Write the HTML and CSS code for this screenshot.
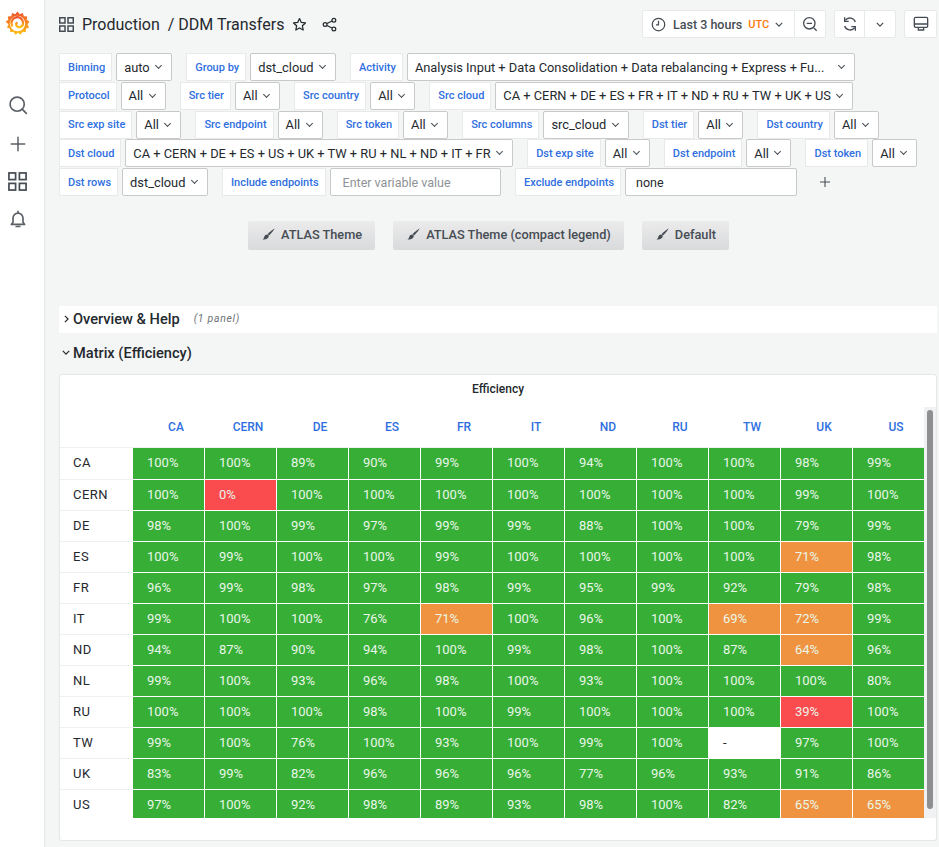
FILE: index.html
```html
<!DOCTYPE html>
<html lang="en">
<head>
    <meta charset="UTF-8">
    <meta name="viewport" content="width=device-width, initial-scale=1.0">
    <title>DDM Transfers</title>
    <link rel="stylesheet" href="styles.css">
</head>
<body>
    <nav class="sidebar">
        <svg class="logo" viewBox="0 0 24 24" width="25" height="26">
            <defs>
                <linearGradient id="logoGrad" x1="0" y1="1" x2="0" y2="0">
                    <stop offset="0" stop-color="#fcc214"/>
                    <stop offset="1" stop-color="#f0502a"/>
                </linearGradient>
            </defs>
            <path fill="url(#logoGrad)" d="M12 1l2.2 2.6 3-1.3.8 3.1 3.3.3-.5 3.2 2.7 1.8-1.9 2.6 1.5 3-3 1.2-.1 3.3-3.2-.4-1.6 2.8-2.7-1.8-2.7 1.8-1.6-2.8-3.2.4-.1-3.3-3-1.2 1.5-3L.5 10.7l2.7-1.8-.5-3.2 3.3-.3.8-3.1 3 1.3z"/>
            <circle cx="12" cy="12.500" r="7.400" fill="#fff"/>
            <path fill="none" stroke="url(#logoGrad)" stroke-width="2.200" stroke-linecap="round" d="M6.800 14.500a5.600 5.600 0 1 1 10.600-2.200 3.700 3.700 0 0 1-5 3.400 2.400 2.400 0 0 1-1.200-3.700"/>
        </svg>
        <svg class="nav-icon nav-search" viewBox="0 0 24 24" width="20" height="20"><circle cx="11" cy="11" r="8.500" fill="none" stroke="#5b6067" stroke-width="2"/><path d="M17 17l5 5" stroke="#5b6067" stroke-width="2" stroke-linecap="round"/></svg>
        <svg class="nav-icon nav-plus" viewBox="0 0 24 24" width="18" height="18"><path d="M12 3v18M3 12h18" stroke="#5b6067" stroke-width="2" stroke-linecap="round"/></svg>
        <svg class="nav-icon nav-apps" viewBox="0 0 20 20" width="19" height="19"><g fill="none" stroke="#464c54" stroke-width="1.8"><rect x="1" y="1" width="7" height="7"/><rect x="12" y="1" width="7" height="7"/><rect x="1" y="12" width="7" height="7"/><rect x="12" y="12" width="7" height="7"/></g></svg>
        <svg class="nav-icon nav-bell" viewBox="0 0 24 24" width="20" height="20"><path fill="none" stroke="#5b6067" stroke-width="2" stroke-linejoin="round" d="M6 11a6 6 0 0 1 12 0v5l2 2.500H4l2-2.500zM12 2v3M9 21h6"/></svg>
    </nav>

    <main class="main">
        <header class="topbar">
            <svg class="crumb-icon" viewBox="0 0 20 20" width="15" height="15"><g fill="none" stroke="#464c54" stroke-width="2"><rect x="1" y="1" width="7" height="7"/><rect x="12" y="1" width="7" height="7"/><rect x="1" y="12" width="7" height="7"/><rect x="12" y="12" width="7" height="7"/></g></svg>
            <span class="crumb">Production</span>
            <span class="crumb crumb-sep">/ DDM Transfers</span>
            <svg class="star" viewBox="0 0 24 24" width="15" height="15"><path fill="none" stroke="#24292e" stroke-width="2" stroke-linejoin="round" d="M12 2.500l2.900 6.200 6.600.8-4.900 4.600 1.300 6.700L12 17.500l-5.900 3.300 1.300-6.700-4.900-4.600 6.600-.8z"/></svg>
            <svg class="share" viewBox="0 0 24 24" width="15" height="15"><g fill="none" stroke="#24292e" stroke-width="2"><circle cx="5" cy="12" r="3"/><circle cx="19" cy="5" r="3"/><circle cx="19" cy="19" r="3"/><path d="M8 10.500l8-4M8 13.500l8 4"/></g></svg>

            <div class="tools">
                <div class="tool-group">
                    <div class="tool tool-time">
                        <svg viewBox="0 0 24 24" width="15" height="15"><circle cx="12" cy="12" r="10" fill="none" stroke="#464c54" stroke-width="2"/><path d="M12 6v6.500H8" fill="none" stroke="#464c54" stroke-width="2"/></svg>
                        <span class="time-text">Last 3 hours</span>
                        <span class="utc">UTC</span>
                        <svg class="chev" viewBox="0 0 10 6" width="8" height="5"><path d="M1 1l4 4 4-4" fill="none" stroke="#464c54" stroke-width="1.500"/></svg>
                    </div>
                    <div class="tool tool-zoom">
                        <svg viewBox="0 0 24 24" width="16" height="16"><circle cx="11" cy="11" r="8.500" fill="none" stroke="#464c54" stroke-width="2"/><path d="M17.500 17.500l4.500 4.500M7 11h8" stroke="#464c54" stroke-width="2"/></svg>
                    </div>
                </div>
                <div class="tool-group">
                    <div class="tool tool-refresh">
                        <svg viewBox="0 0 24 24" width="16" height="16"><path d="M20 9a8.500 8.500 0 0 0-15-2.500M4 15a8.500 8.500 0 0 0 15 2.500" fill="none" stroke="#464c54" stroke-width="2"/><path d="M4 2v6h6M20 22v-6h-6" fill="none" stroke="#464c54" stroke-width="2"/></svg>
                    </div>
                    <div class="tool tool-more">
                        <svg class="chev" viewBox="0 0 10 6" width="8" height="5"><path d="M1 1l4 4 4-4" fill="none" stroke="#464c54" stroke-width="1.500"/></svg>
                    </div>
                </div>
                <div class="tool-group">
                    <div class="tool tool-tv">
                        <svg viewBox="0 0 24 24" width="16" height="16"><path d="M4 2h16a2 2 0 0 1 2 2v11a2 2 0 0 1-2 2H4a2 2 0 0 1-2-2V4a2 2 0 0 1 2-2zM2 12h20M7 21h10M8 17v4M16 17v4" fill="none" stroke="#464c54" stroke-width="2"/></svg>
                    </div>
                </div>
            </div>
        </header>

        <section class="vars">
            <div class="var"><span class="var-label">Binning</span><span class="var-select">auto<i class="caret"></i></span></div>
            <div class="var"><span class="var-label">Group by</span><span class="var-select">dst_cloud<i class="caret"></i></span></div>
            <div class="var"><span class="var-label">Activity</span><span class="var-select var-activity">Analysis Input + Data Consolidation + Data rebalancing + Express + Fu...<i class="caret"></i></span></div>
            <div class="var"><span class="var-label">Protocol</span><span class="var-select">All<i class="caret"></i></span></div>
            <div class="var"><span class="var-label">Src tier</span><span class="var-select">All<i class="caret"></i></span></div>
            <div class="var"><span class="var-label">Src country</span><span class="var-select">All<i class="caret"></i></span></div>
            <div class="var"><span class="var-label">Src cloud</span><span class="var-select">CA + CERN + DE + ES + FR + IT + ND + RU + TW + UK + US<i class="caret"></i></span></div>
            <div class="var"><span class="var-label">Src exp site</span><span class="var-select">All<i class="caret"></i></span></div>
            <div class="var"><span class="var-label">Src endpoint</span><span class="var-select">All<i class="caret"></i></span></div>
            <div class="var"><span class="var-label">Src token</span><span class="var-select">All<i class="caret"></i></span></div>
            <div class="var"><span class="var-label">Src columns</span><span class="var-select">src_cloud<i class="caret"></i></span></div>
            <div class="var"><span class="var-label">Dst tier</span><span class="var-select">All<i class="caret"></i></span></div>
            <div class="var"><span class="var-label">Dst country</span><span class="var-select">All<i class="caret"></i></span></div>
            <div class="var"><span class="var-label">Dst cloud</span><span class="var-select">CA + CERN + DE + ES + US + UK + TW + RU + NL + ND + IT + FR<i class="caret"></i></span></div>
            <div class="var"><span class="var-label">Dst exp site</span><span class="var-select">All<i class="caret"></i></span></div>
            <div class="var"><span class="var-label">Dst endpoint</span><span class="var-select">All<i class="caret"></i></span></div>
            <div class="var"><span class="var-label">Dst token</span><span class="var-select">All<i class="caret"></i></span></div>
            <div class="var"><span class="var-label">Dst rows</span><span class="var-select">dst_cloud<i class="caret"></i></span></div>
            <div class="var"><span class="var-label">Include endpoints</span><span class="var-select var-input placeholder">Enter variable value</span></div>
            <div class="var"><span class="var-label">Exclude endpoints</span><span class="var-select var-input var-none">none</span></div>
            <svg class="add-var" viewBox="0 0 12 12" width="10" height="10"><path d="M6 0v12M0 6h12" stroke="#464c54" stroke-width="1.300"/></svg>
        </section>

        <section class="themes">
            <a class="theme-btn"><svg viewBox="0 0 16 16" width="13" height="13"><path fill="#464c54" d="M15.500.500c.4.400-5 7-6.800 8.600L6.900 7.300C8.500 5.500 15.100.100 15.500.500zM6.200 8c1.200 0 2.200 1 2.100 2.300-.1 2.700-3.800 4.400-7.800 3.700 1.500-.8 2-1.700 2.300-3C3 9.500 4.500 8 6.200 8z"/></svg>ATLAS Theme</a>
            <a class="theme-btn"><svg viewBox="0 0 16 16" width="13" height="13"><path fill="#464c54" d="M15.500.500c.4.400-5 7-6.800 8.600L6.900 7.300C8.500 5.500 15.100.100 15.500.500zM6.200 8c1.200 0 2.200 1 2.100 2.300-.1 2.700-3.800 4.400-7.800 3.700 1.500-.8 2-1.700 2.300-3C3 9.500 4.500 8 6.200 8z"/></svg>ATLAS Theme (compact legend)</a>
            <a class="theme-btn"><svg viewBox="0 0 16 16" width="13" height="13"><path fill="#464c54" d="M15.500.500c.4.400-5 7-6.800 8.600L6.900 7.300C8.500 5.500 15.100.100 15.500.500zM6.200 8c1.200 0 2.200 1 2.100 2.300-.1 2.700-3.800 4.400-7.800 3.700 1.500-.8 2-1.700 2.300-3C3 9.500 4.500 8 6.200 8z"/></svg>Default</a>
        </section>

        <div class="row-head row-closed">
            <svg viewBox="0 0 6 10" width="5" height="8"><path d="M1 1l4 4-4 4" fill="none" stroke="#24292e" stroke-width="1.500"/></svg>
            <span class="row-title">Overview &amp; Help</span>
            <span class="row-count">(1 panel)</span>
        </div>
        <div class="row-head row-open">
            <svg viewBox="0 0 10 6" width="8" height="5"><path d="M1 1l4 4 4-4" fill="none" stroke="#24292e" stroke-width="1.500"/></svg>
            <span class="row-title">Matrix (Efficiency)</span>
        </div>

        <section class="panel">
            <h2 class="panel-title">Efficiency</h2>
            <div class="matrix-wrap">
                <div class="scroll-track"><div class="scroll-thumb"></div></div>
                <table class="matrix">
                    <thead>
                        <tr><th></th><th>CA</th><th>CERN</th><th>DE</th><th>ES</th><th>FR</th><th>IT</th><th>ND</th><th>RU</th><th>TW</th><th>UK</th><th>US</th></tr>
                    </thead>
                    <tbody>
                        <tr><th>CA</th><td>100%</td><td>100%</td><td>89%</td><td>90%</td><td>99%</td><td>100%</td><td>94%</td><td>100%</td><td>100%</td><td>98%</td><td>99%</td></tr>
                        <tr><th>CERN</th><td>100%</td><td class="bad">0%</td><td>100%</td><td>100%</td><td>100%</td><td>100%</td><td>100%</td><td>100%</td><td>100%</td><td>99%</td><td>100%</td></tr>
                        <tr><th>DE</th><td>98%</td><td>100%</td><td>99%</td><td>97%</td><td>99%</td><td>99%</td><td>88%</td><td>100%</td><td>100%</td><td>79%</td><td>99%</td></tr>
                        <tr><th>ES</th><td>100%</td><td>99%</td><td>100%</td><td>100%</td><td>99%</td><td>100%</td><td>100%</td><td>100%</td><td>100%</td><td class="warn">71%</td><td>98%</td></tr>
                        <tr><th>FR</th><td>96%</td><td>99%</td><td>98%</td><td>97%</td><td>98%</td><td>99%</td><td>95%</td><td>99%</td><td>92%</td><td>79%</td><td>98%</td></tr>
                        <tr><th>IT</th><td>99%</td><td>100%</td><td>100%</td><td>76%</td><td class="warn">71%</td><td>100%</td><td>96%</td><td>100%</td><td class="warn">69%</td><td class="warn">72%</td><td>99%</td></tr>
                        <tr><th>ND</th><td>94%</td><td>87%</td><td>90%</td><td>94%</td><td>100%</td><td>99%</td><td>98%</td><td>100%</td><td>87%</td><td class="warn">64%</td><td>96%</td></tr>
                        <tr><th>NL</th><td>99%</td><td>100%</td><td>93%</td><td>96%</td><td>98%</td><td>100%</td><td>93%</td><td>100%</td><td>100%</td><td>100%</td><td>80%</td></tr>
                        <tr><th>RU</th><td>100%</td><td>100%</td><td>100%</td><td>98%</td><td>100%</td><td>99%</td><td>100%</td><td>100%</td><td>100%</td><td class="bad">39%</td><td>100%</td></tr>
                        <tr><th>TW</th><td>99%</td><td>100%</td><td>76%</td><td>100%</td><td>93%</td><td>100%</td><td>99%</td><td>100%</td><td class="none">-</td><td>97%</td><td>100%</td></tr>
                        <tr><th>UK</th><td>83%</td><td>99%</td><td>82%</td><td>96%</td><td>96%</td><td>96%</td><td>77%</td><td>96%</td><td>93%</td><td>91%</td><td>86%</td></tr>
                        <tr><th>US</th><td>97%</td><td>100%</td><td>92%</td><td>98%</td><td>89%</td><td>93%</td><td>98%</td><td>100%</td><td>82%</td><td class="warn">65%</td><td class="warn">65%</td></tr>
                    </tbody>
                </table>
            </div>
        </section>
    </main>
</body>
</html>
```

FILE: styles.css
```css
* {
    box-sizing: border-box;
}

html,
body {
    height: 100%;
}

body {
    margin: 0;
    display: flex;
    overflow: hidden;
    font-family: Roboto, "Liberation Sans", sans-serif;
    background-color: #f4f5f5;
    color: #24292e;
}

.sidebar {
    flex: 0 0 45px;
    display: flex;
    flex-direction: column;
    align-items: center;
    padding-right: 9px;
    background-color: #fff;
    border-right: 1px solid #e4e6e7;
}

.logo {
    margin-top: 10px;
    flex-shrink: 0;
}

.nav-search {
    margin-top: 59px;
}

.nav-plus {
    margin-top: 20px;
}

.nav-apps {
    margin-top: 19px;
}

.nav-bell {
    margin-top: 18px;
}

.main {
    flex: 1;
    min-width: 0;
    padding: 10px 2px 0 14px;
}

.topbar {
    display: flex;
    align-items: center;
    height: 28px;
}

.crumb-icon {
    margin-right: 8px;
}

.crumb {
    font-size: 16px;
    color: #24292e;
}

.crumb-sep {
    margin-left: 8px;
}

.star {
    margin-left: 8px;
}

.share {
    margin-left: 15px;
}

.tools {
    margin-left: auto;
    display: flex;
    gap: 8px;
}

.tool-group {
    display: flex;
    height: 28px;
    background-color: #fff;
    border: 1px solid #e8e9ea;
    border-radius: 2px;
}

.tool {
    display: flex;
    align-items: center;
    justify-content: center;
}

.tool-time {
    width: 152px;
    padding-left: 8px;
    justify-content: flex-start;
    border-right: 1px solid #e8e9ea;
    gap: 6px;
}

.time-text {
    margin-left: 1px;
    font-size: 12.5px;
    font-weight: 500;
    color: #464c54;
}

.utc {
    font-size: 11px;
    font-weight: 500;
    color: #ff780a;
}

.tool-zoom {
    width: 30px;
}

.tool-refresh {
    width: 30px;
    border-right: 1px solid #e8e9ea;
}

.tool-more {
    width: 30px;
}

.tool-tv {
    width: 31px;
}

.vars {
    display: flex;
    flex-wrap: wrap;
    align-items: center;
    gap: 0.75px 14px;
    margin-top: 15px;
}

.var {
    display: flex;
    gap: 4px;
    height: 28px;
}

.var-label {
    display: flex;
    align-items: center;
    padding: 0 6px 0 8px;
    font-size: 11px;
    font-weight: 500;
    color: #2f6fe0;
    background-color: #fff;
    border: 1px solid #e8e9ea;
}

.var-select {
    display: flex;
    align-items: center;
    padding: 0 7px;
    font-size: 12.85px;
    color: #24292e;
    background-color: #fff;
    border: 1px solid #c7c9cb;
    border-radius: 2px;
    white-space: nowrap;
}

.caret {
    width: 5px;
    height: 5px;
    margin: -3px 3px 0 6.5px;
    border-right: 1px solid #464c54;
    border-bottom: 1px solid #464c54;
    transform: rotate(45deg);
}

.var-activity {
    width: 448px;
    justify-content: space-between;
}

.var-input {
    width: 171.5px;
    padding-left: 12px;
}

.placeholder {
    color: #8e9296;
    font-size: 12.5px;
}

.var-none {
    padding-left: 10px;
    font-size: 12.5px;
}

.add-var {
    margin-left: 9px;
}

.themes {
    display: flex;
    gap: 18px;
    margin: 25px 0 0 189px;
}

.theme-btn {
    display: flex;
    align-items: center;
    gap: 6px;
    height: 29px;
    padding: 0 13px 2px 14px;
    font-size: 12.75px;
    font-weight: 500;
    color: #464c54;
    background: linear-gradient(#ebebec, #d9dadb);
    border-radius: 2px;
}

.row-head {
    display: flex;
    align-items: center;
    height: 27px;
    padding-bottom: 2px;
}

.row-closed {
    margin-top: 56px;
    background-color: #fff;
}

.row-closed svg {
    margin: 0 4px 0 5px;
}

.row-open svg {
    margin: 0 3px 0 3px;
}

.row-open {
    margin-top: 7px;
}

.row-title {
    font-size: 14.6px;
    font-weight: 500;
    color: #24292e;
}

.row-count {
    margin-left: 14px;
    font-size: 10.5px;
    font-style: italic;
    color: #6e7276;
    letter-spacing: 0.7px;
}

.panel {
    height: 467px;
    margin-top: 7px;
    padding-top: 2px;
    background-color: #fff;
    border: 1px solid #e4e6e7;
    border-radius: 3px;
}

.panel-title {
    margin: 0;
    height: 30px;
    line-height: 24px;
    font-size: 12px;
    font-weight: 500;
    text-align: center;
    color: #24292e;
}

.matrix-wrap {
    position: relative;
    height: 411px;
    overflow: hidden;
}

.scroll-track {
    position: absolute;
    top: 0;
    right: 0;
    width: 12px;
    height: 100%;
    background-color: #f0f1f2;
}

.scroll-thumb {
    width: 6px;
    height: 399px;
    margin: 3px 0 0 3px;
    background-color: #8e8f90;
    border-radius: 3px;
}

.matrix {
    width: 865px;
    table-layout: fixed;
    border-collapse: separate;
    border-spacing: 0;
}

.matrix thead th {
    height: 41px;
    padding: 0 0 0 14px;
    font-size: 12px;
    font-weight: 500;
    color: #2f6fe0;
    text-align: center;
    border-bottom: 1px solid #eeeff0;
}

.matrix thead th:first-child {
    width: 73px;
}

.matrix tbody th {
    padding: 0 0 2px 13px;
    font-size: 13px;
    font-weight: 400;
    letter-spacing: 0.5px;
    text-align: left;
    color: #24292e;
    border-bottom: 1px solid #eeeff0;
}

.matrix td {
    height: 31px;
    padding: 0 0 2px 14px;
    font-size: 13px;
    color: #e9f6e9;
    background-color: #37ae36;
    border-right: 1px solid #fff;
    border-bottom: 1px solid #fff;
}

.matrix tbody tr:first-child td {
    height: 32px;
}

.matrix td.warn {
    background-color: #f09340;
}

.matrix td.bad {
    background-color: #fa4b4f;
}

.matrix td.none {
    color: #24292e;
    background-color: #fff;
}
```
